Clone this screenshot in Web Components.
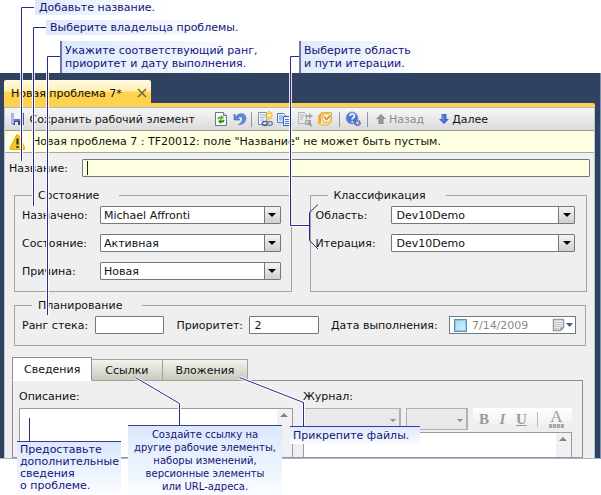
<!DOCTYPE html>
<html lang="ru">
<head>
<meta charset="utf-8">
<title>Новая проблема 7</title>
<style>
html, body { margin: 0; background: #fff; }
body { font: 11px/15px "DejaVu Sans", Verdana, sans-serif; color: #111; }
</style>
</head>
<body>
<annotated-form></annotated-form>

<script>
const define = (name, html, init) => {
  const t = document.createElement('template');
  t.innerHTML = html;
  customElements.define(name, class extends HTMLElement {
    constructor() {
      super();
      this.attachShadow({ mode: 'open' }).append(t.content.cloneNode(true));
    }
    connectedCallback() { if (init) init(this, this.shadowRoot); }
  });
};

const icons = {
  save: '<path d="M1 2h13v12H3l-2-2z" fill="#6674c4"/><path d="M1 2h3v11l-3-1z" fill="#a9b6ea"/><path d="M4 2h8v6H4z" fill="#f3f5fc"/><path d="M12 2h2v12h-2z" fill="#4a559e"/><path d="M4 10h8v4H4z" fill="#3c4684"/><path d="M5 11h3v3H5z" fill="#e4e8f8"/>',
  refresh: '<path d="M2.500 1.500h8l3 3v10h-11z" fill="#fdfdf6" stroke="#62759c"/><path d="M10.500 1.500v3h3" fill="#dfe8f8" stroke="#62759c"/><path d="M4.500 8q0-3 3.500-2.500V4l3 2.500L8 9V7.500q-2-.3-2 1z" fill="#5fa821"/><path d="M11.500 9q0 3-3.500 2.500V13l-3-2.500L8 8v1.500q2 .3 2-1z" fill="#418617"/>',
  undo: '<path d="M2 3v6h6L5.800 6.800Q10 4 10.500 8q0 3-4 6 7-1 7.500-6.500Q13.500 1.500 7.500 3 5.500 3.500 4.200 5.200z" fill="#6289dc" stroke="#3f63bd" stroke-width=".6"/>',
  newlink: '<path d="M1.500 1.500h8v12h-8z" fill="#f2f6fd" stroke="#7c8fb4"/><path d="M3 4h5M3 6.500h5M3 9h4" stroke="#98aed6"/><path d="M12 0v9M8 4.500h8M9 1.500l6 6M15 1.500l-6 6" stroke="#f2b935" stroke-width="1.500"/><circle cx="12" cy="4.500" r="2" fill="#fff3a6"/><ellipse cx="8" cy="12.500" rx="2.800" ry="2" fill="none" stroke="#59647e" stroke-width="1.500"/><ellipse cx="12.500" cy="12.500" rx="2.800" ry="2" fill="none" stroke="#7a839a" stroke-width="1.500"/>',
  copy: '<path d="M.5 2.500h6l2 2v7h-8z" fill="#eef4ff" stroke="#5576b8"/><path d="M2 5h4M2 7h4M2 9h4" stroke="#6d90d4"/><path d="M6.500 5.500h6l2 2v7h-8z" fill="#eef4ff" stroke="#3e62ae"/><path d="M8 8.500h4M8 10.500h5M8 12.500h5" stroke="#4c76c8"/>',
  linkoff: '<path d="M1.500 1.500h6l2 2v9h-8z" fill="#e9e9e9" stroke="#b3b3b3"/><path d="M3 4h4M3 6h4M3 8h3" stroke="#bdbdbd"/><path d="M8 5h4" stroke="#aaa" stroke-width="2"/><path d="M12 2v6l4-3z" fill="#aaa"/><path d="M8.500 9.500h4v4h-4z" fill="#ccc" stroke="#a6a6a6"/><path d="M13 9v5M11 12l4 3" stroke="#8f8f8f" stroke-width="1.500"/>',
  outlook: '<path d="M4.500 1.500h10v9l-3 3.500h-8l-2-2V5z" fill="#fbe7a2" stroke="#e5b050"/><path d="M1.500 5l3-3.500h2L4 5v7.500h-2.500z" fill="#efb042"/><circle cx="9.500" cy="7" r="4.500" fill="#fff7da" stroke="#e6b764" stroke-width="1.400"/><path d="M7 5.500l2.500 3L13 5" fill="none" stroke="#cf8a30" stroke-width="1.600"/>',
  help: '<circle cx="7" cy="7" r="6" fill="#4f79cf" stroke="#8ba4dc"/><path d="M5 5q0-2 2.300-2T9.500 5q0 1-1.300 1.700T7.300 8.500M7.300 10v1.500" fill="none" stroke="#fff" stroke-width="1.600"/><circle cx="12.500" cy="12" r="2.600" fill="#8a92c8" stroke="#5f69a8" stroke-width="1.600" stroke-dasharray="1.400 .8"/><circle cx="12.500" cy="12" r="1" fill="#e8ebf8"/>',
  up: '<path d="M8 3l5 5h-2.500v5h-5V8H3z" fill="#8d8d8d"/><path d="M8 5v7" stroke="#b0b0b0"/>',
  down: '<path d="M8 13L3 8h2.500V3h5v5H13z" fill="#3e6bd0"/><path d="M7 4v6" stroke="#88a8ee"/>',
  warn: '<path d="M7.500 1Q8.500 0 9.500 1L16 14q0 1.500-1 1.500H2Q.8 15.500 1 14z" fill="#f7c71e" stroke="#d39a10" stroke-width=".8"/><path d="M8.500 4.500v6M8.500 12v2" stroke="#222" stroke-width="2"/>'
};

define('ui-icon', `<style>
:host { display: inline-flex; flex: none; width: 16px; height: 16px; }
svg { width: 100%; height: 100%; }
</style><svg viewBox="0 0 16 16" aria-hidden="true"></svg>`,
(el, root) => { root.querySelector('svg').innerHTML = icons[el.getAttribute('name')]; });

define('tool-button', `<style>
:host { display: flex; }
button { display: flex; align-items: center; font: inherit; color: inherit; border: 0; padding: 0; background: none; white-space: nowrap; }
</style><button><slot></slot></button>`,
(el, root) => {
  const b = root.querySelector('button');
  b.disabled = el.hasAttribute('disabled');
  if (el.title) b.setAttribute('aria-label', el.title);
});

define('tool-separator', `<style>
:host { display: block; width: 1px; height: 15px; background: #8d96a6; }
</style>`);

define('form-toolbar', `<style>
:host { display: flex; align-items: center; height: 22px; padding-left: 5px; background: linear-gradient(#f7f7f7, #dbdbdb); border-bottom: 1px solid #9a9a9a; overflow: hidden; }
tool-button { margin-right: 4px; }
.main { margin-right: 18px; }
.tight { margin-right: 3px; }
.wide { margin-right: 6px; }
tool-separator { margin-right: 5px; }
.back { color: #8b8b8b; margin-right: 12px; }
</style>
<tool-button class="main"><ui-icon name="save"></ui-icon>&nbsp;Сохранить рабочий элемент</tool-button>
<tool-button title="Обновить" class="tight"><ui-icon name="refresh"></ui-icon></tool-button>
<tool-button title="Отменить" class="tight"><ui-icon name="undo"></ui-icon></tool-button>
<tool-separator></tool-separator>
<tool-button title="Создать связанный элемент"><ui-icon name="newlink"></ui-icon></tool-button>
<tool-button title="Копировать"><ui-icon name="copy"></ui-icon></tool-button>
<tool-button title="Добавить ссылку" disabled><ui-icon name="linkoff"></ui-icon></tool-button>
<tool-button title="Отправить" class="wide"><ui-icon name="outlook"></ui-icon></tool-button>
<tool-separator></tool-separator>
<tool-button title="Справка" class="wide"><ui-icon name="help"></ui-icon></tool-button>
<tool-separator></tool-separator>
<tool-button class="back" disabled><ui-icon name="up"></ui-icon>Назад</tool-button>
<tool-button><ui-icon name="down"></ui-icon>Далее</tool-button>`);

define('message-bar', `<style>
:host { display: flex; align-items: center; gap: 7px; height: 21px; padding-left: 4px; background: #ffffe1; border-bottom: 1px solid #a9a9a0; white-space: nowrap; }
</style><ui-icon name="warn"></ui-icon><span><slot></slot></span>`);

define('text-field', `<style>
:host { display: flex; align-items: center; min-width: 0; }
label { flex: none; width: var(--label, 73px); white-space: nowrap; }
.box { flex: 1; min-width: 0; display: flex; align-items: center; box-sizing: border-box; height: 18px; border: 1px solid #6f7a80; border-radius: 1px; background: var(--fill, #fff); padding-left: 4px; }
:host([caret]) .box::before { content: ""; width: 1px; height: 14px; background: #222; margin-right: -1px; }
input { flex: 1; width: 100%; min-width: 0; border: 0; padding: 0; background: none; font: inherit; color: inherit; outline: 0; }
</style><label for="i"></label><div class="box"><input id="i" type="text"></div>`,
(el, root) => {
  root.querySelector('label').textContent = el.getAttribute('label');
  root.querySelector('input').value = el.getAttribute('value') || '';
});

define('combo-field', `<style>
:host { display: flex; align-items: center; }
label { flex: none; width: var(--label, 78px); white-space: nowrap; }
.box { position: relative; flex: 1; min-width: 0; display: flex; height: 18px; }
select { appearance: none; width: 100%; border: 1px solid #6f7a80; border-radius: 1px; background: #fff; font: inherit; color: inherit; padding: 0 18px 0 var(--inset, 3px); outline: 0; }
i { position: absolute; right: 1px; top: 1px; bottom: 1px; width: 15px; display: grid; place-items: center; border-left: 1px solid #6f7a80; background: linear-gradient(#f4f4f4, #cfcfcf); pointer-events: none; }
i::after { content: ""; border: 4px solid transparent; border-top-color: #000; border-bottom: 0; }
</style><label for="s"></label><div class="box"><select id="s"></select><i></i></div>`,
(el, root) => {
  root.querySelector('label').textContent = el.getAttribute('label');
  root.querySelector('select').replaceChildren(new Option(el.getAttribute('value')));
});

define('date-field', `<style>
:host { display: flex; align-items: center; min-width: 0; }
label { flex: none; width: 118px; white-space: nowrap; }
.box { flex: 1; min-width: 0; display: flex; align-items: center; box-sizing: border-box; height: 18px; border: 1px solid #6f7a80; background: #fff; padding: 0 2px 0 4px; }
.tick { appearance: none; flex: none; width: 13px; height: 13px; margin: 0 5px 0 0; border: 1px solid #5d8fb4; background: linear-gradient(135deg, #a4d5f2, #d8f1fe); box-shadow: inset 0 0 0 1px #8ec9ec; }
.date { flex: 1; width: 100%; min-width: 0; border: 0; padding: 0; background: none; font: inherit; color: #8a8a8a; }
button { border: 0; background: none; padding: 0; display: flex; }
</style><label for="d">Дата выполнения:</label>
<div class="box"><input class="tick" type="checkbox" aria-label="Задать дату"><input class="date" id="d" type="text" value="7/14/2009">
<button aria-label="Открыть календарь"><svg width="21" height="14"><path d="M1.500 1.500h10v8l-3 3h-7z" fill="#eee" stroke="#9a9a9e" stroke-width="1.500"/><path d="M3 4.500h7M3 6.500h7M3 8.500h7M3 10.500h4" stroke="#c2c2c6"/><path d="M8.500 12.500v-3h3z" fill="#8a8a8e"/><path d="M14 5h7l-3.500 4z" fill="#3f5c96"/></svg></button></div>`);

define('field-group', `<style>
:host { display: block; min-width: 0; }
fieldset { display: block; box-sizing: border-box; height: 100%; margin: 0; min-width: 0; border: 1px solid #a3a3a3; padding: 3px var(--right, 10px) 11px var(--left, 7px); }
legend { padding: 0 20px 0 6px; margin-left: var(--legend, 10px); }
</style><fieldset><legend></legend><slot></slot></fieldset>`,
(el, root) => { root.querySelector('legend').textContent = el.getAttribute('legend'); });

define('field-stack', `<style>
:host { display: flex; flex-direction: column; gap: 10px; }
</style><slot></slot>`);

define('field-row', `<style>
:host { display: grid; grid-template-columns: 143fr 143fr 246fr; gap: 12px; }
</style><slot></slot>`);

define('tab-strip', `<style>
:host { display: flex; align-items: flex-end; margin-bottom: -1px; position: relative; }
button { font: inherit; color: inherit; height: 22px; padding: 0 13px; border: 1px solid #a2a2a0; border-left-width: 0; background: linear-gradient(#f3f3f0, #c9c9bc); white-space: nowrap; }
button[aria-selected=true] { height: 24px; padding: 0 11px; border: 1px solid #8e8e92; border-bottom-color: #fff; background: #fff; }
</style><div role="tablist" style="display:contents"><button role="tab" aria-selected="true">Сведения</button><button role="tab" aria-selected="false">Ссылки</button><button role="tab" aria-selected="false">Вложения</button></div>`);

define('text-area', `<style>
:host { display: flex; border: 1px solid #9c9ca0; border-bottom: 0; background: #fff; }
textarea { flex: 1; min-width: 0; border: 0; padding: 4px; resize: none; outline: 0; background: none; font: inherit; overflow: hidden; }
i { width: 15px; background: #f2f0f2; display: flex; justify-content: center; }
i::before { content: ""; height: 0; margin-top: 4px; border: 4px solid transparent; border-bottom-color: #848484; border-top: 0; }
</style><textarea></textarea><i></i>`,
(el, root) => root.querySelector('textarea').setAttribute('aria-label', el.getAttribute('label')));

define('format-bar', `<style>
:host { display: flex; height: 22px; gap: 5px; }
select { appearance: none; box-sizing: border-box; width: 62px; border: 1px solid #b0b0b4; background: #e9e9eb; border-width: 1px 2px 1px 1px; opacity: 1; }
.combo { display: flex; position: relative; }
.combo::after { content: ""; position: absolute; right: 5px; top: 11px; border: 3px solid transparent; border-top-color: #8e8e92; border-bottom: 0; }
.font { width: 98px; } .font select { width: 100%; }
.tools { flex: 1; display: flex; align-items: center; justify-content: space-between; padding: 0 8px 0 6px; background: linear-gradient(#fff, #ececee); font: 700 15px/20px "Liberation Serif", serif; }
button { font: inherit; color: #9a9a9e; border: 0; padding: 0; background: none; }
.i { font-style: italic; } .u { text-decoration: underline; }
.sep { width: 1px; height: 15px; background: #bbb; }
.a { display: flex; flex-direction: column; align-items: center; font-size: 17px; line-height: 14px; font-weight: 400; }
.a::after { content: ""; width: 15px; height: 4px; background: repeating-linear-gradient(90deg, #aaaaae 0 3px, #d4d4d6 3px 4px); }
</style><span class="combo font"><select disabled aria-label="Шрифт"></select></span><span class="combo"><select disabled aria-label="Размер"></select></span>
<span class="tools"><button>B</button><button class="i">I</button><button class="u">U</button><span class="sep"></span><button class="a">A</button></span>`);

define('details-panel', `<style>
:host { display: grid; grid-template-columns: 275fr 270fr; gap: 10px; border: 1px solid #8e8e92; border-bottom-color: #8e98a6; padding: 8px 10px 0 6px; }
section { display: flex; flex-direction: column; min-width: 0; }
span { margin-bottom: 4px; }
text-area { height: 48px; }
.log { height: 24px; margin-top: 2px; }
</style><section><span>Описание:</span><text-area label="Описание"></text-area></section>
<section><span>Журнал:</span><format-bar></format-bar><text-area class="log" label="Журнал"></text-area></section>`);

define('document-tab', `<style>
:host { display: flex; }
div { display: flex; align-items: center; gap: 15px; height: 23px; padding: 3px 4px 0 7px; box-sizing: border-box; background: linear-gradient(#fffbe4, #fff0b4 45%, #ffd24e 55%, #ffd24e); border-radius: 2px 2px 0 0; white-space: nowrap; }
button { border: 0; background: none; padding: 0; display: flex; }
</style><div><span><slot></slot></span><button aria-label="Закрыть"><svg width="10" height="10"><path d="M1 1l8 8M9 1L1 9" stroke="#75683e" stroke-width="1.500"/></svg></button></div>`);

define('item-window', `<style>
:host { display: block; background: #2f4260; padding: 7px 5px 0 4px; border-right: 1px solid #8492a8; border-bottom: 1px solid #a9b4c4; }
.bar { height: 4px; background: #ffd24e; border-bottom: 1px solid #a9b8d4; border-radius: 0 2px 0 0; }
.page { background: #efefef; border: 0 solid #b9c6da; border-width: 0 1px; }
form { display: block; padding: 6px 4px 0 4px; }
.title { --label: 73px; --fill: #ffffe1; margin-bottom: 11px; }
.groups { padding: 0 3px 0 5px; display: grid; grid-template-columns: 1fr 1fr; gap: 6px 18px; margin-bottom: 11px; }
.class { --label: 75px; --inset: 5px; --left: 5px; --right: 11px; --legend: 12px; }
.plan { grid-column: 1 / 3; margin-right: 1px; --right: 9px; }
.tabs { padding: 0 7px 0 3px; }
</style>
<document-tab>Новая проблема 7*</document-tab>
<div class="bar"></div>
<div class="page">
<form-toolbar></form-toolbar>
<message-bar>Новая проблема 7 : TF20012: поле "Название" не может быть пустым.</message-bar>
<form>
<text-field class="title" label="Название:" caret></text-field>
<div class="groups">
<field-group legend="Состояние"><field-stack>
<combo-field label="Назначено:" value="Michael Affronti"></combo-field>
<combo-field label="Состояние:" value="Активная"></combo-field>
<combo-field label="Причина:" value="Новая"></combo-field>
</field-stack></field-group>
<field-group class="class" legend="Классификация"><field-stack>
<combo-field label="Область:" value="Dev10Demo"></combo-field>
<combo-field label="Итерация:" value="Dev10Demo"></combo-field>
</field-stack></field-group>
<field-group class="plan" legend="Планирование"><field-row>
<text-field label="Ранг стека:"></text-field>
<text-field label="Приоритет:" value="2"></text-field>
<date-field></date-field>
</field-row></field-group>
</div>
<div class="tabs"><tab-strip></tab-strip><details-panel></details-panel></div>
</form>
</div>`);

define('call-out', `<style>
:host { position: absolute; box-sizing: border-box; color: #14147a; white-space: nowrap; line-height: 13px; padding: 1px 4px; background: linear-gradient(100deg, #dde9fb, #fff); }
:host([edge=left]) { border-left: 2px solid #7272b0; padding: 3px; }
:host([edge=top]) { border-top: 1px solid #3a3a94; background: linear-gradient(#dbe8fc, #fafcff); padding: 2px 3px; }
:host([dense]) { line-height: 12px; }
:host([centered]) { text-align: center; font-size: 10px; }
</style><slot></slot>`);

define('leader-lines', `<style>
:host { position: absolute; left: 0; top: 0; pointer-events: none; }
svg { display: block; fill: none; }
.halo { stroke: #fff; stroke-width: 3; opacity: .85; }
.ink { stroke: #2a2a8c; stroke-width: 1; }
</style><svg width="601" height="495" aria-hidden="true">
<defs><g id="l"><path d="M34 7.500H21.500V161"/><path d="M46 27.500H33.500V206"/><path d="M60 56.500H47.500V315"/><path d="M300 56.500H290.500V225.500H309"/><path d="M29.500 418V441"/><path d="M135.500 377.500L179.500 403.500V425"/><path d="M239.500 377.500L303.500 402.500V426"/></g></defs>
<use href="#l" class="halo"/><use href="#l" class="ink"/><path class="ink" d="M318 204.500L309.500 212.500V240.500L318 249"/></svg>`);

define('annotated-form', `<style>
:host { display: block; position: relative; padding: 73px 0 36px; }
</style>
<item-window></item-window>
<leader-lines></leader-lines>
<call-out style="left:35px;top:0;width:130px">Добавьте название.</call-out>
<call-out style="left:46px;top:20px;width:196px">Выберите владельца проблемы.</call-out>
<call-out edge="left" style="left:60px;top:41px;width:206px">Укажите соответствующий ранг,<br>приоритет и дату выполнения.</call-out>
<call-out edge="left" style="left:299px;top:41px;width:122px">Выберите область<br>и пути итерации.</call-out>
<call-out edge="top" dense style="left:17px;top:441px;width:104px">Предоставьте<br>дополнительные<br>сведения<br>о проблеме.</call-out>
<call-out edge="top" centered style="left:128px;top:425px;width:154px">Создайте ссылку на<br>другие рабочие элементы,<br>наборы изменений,<br>версионные элементы<br>или URL-адреса.</call-out>
<call-out edge="top" style="left:290px;top:426px;width:130px">Прикрепите файлы.</call-out>`);
</script>
</body>
</html>
